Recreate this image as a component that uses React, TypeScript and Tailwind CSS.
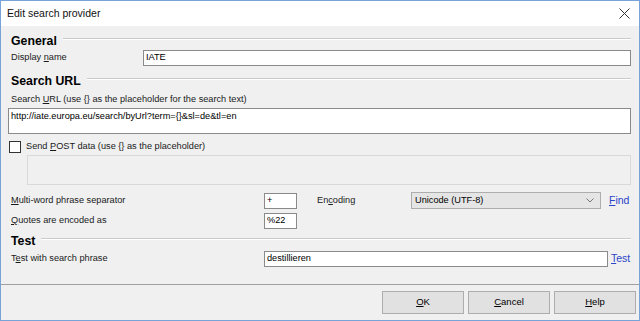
import React from "react";

const font = { fontFamily: '"Liberation Sans", Arial, sans-serif' };

function Header({ text }: { text: string }) {
  return (
    <div className="flex items-center h-[14px]">
      <span className="ml-[3px] text-[12.3px] font-bold text-black leading-none">{text}</span>
      <div className="flex-1 ml-[6px] mt-[-5px] border-t border-[#c9c9c9] border-b-white border-b h-[2px]" />
    </div>
  );
}

function U({ c }: { c: string }) {
  return <span className="underline underline-offset-[1px]">{c}</span>;
}

export default function App() {
  return (
    <div
      style={font}
      className="w-[640px] h-[321px] bg-[#f0f0f0] border border-[#78a3d8] flex flex-col text-[9.2px] text-[#1a1a1a] overflow-hidden"
    >
      {/* Title bar */}
      <div className="h-[25px] bg-white flex items-center justify-between pl-[6px] pr-[9px] shrink-0">
        <span className="text-[10.5px] text-[#111]">Edit search provider</span>
        <svg width="11" height="11" viewBox="0 0 11 11">
          <path d="M0.5 0.5 L10.5 10.5 M10.5 0.5 L0.5 10.5" stroke="#333" strokeWidth="1" />
        </svg>
      </div>

      {/* Body */}
      <div className="flex flex-col pl-[7px] pr-[8px]">
        <div className="mt-[8px]">
          <Header text="General" />
        </div>
        <div className="mt-[2px] flex items-center h-[16px]">
          <span className="ml-[3px] w-[132px]">
            Display <U c="n" />ame
          </span>
          <div className="flex-1 h-[16px] bg-white border border-[#8a8a8a] flex items-center pl-[2px] text-black">
            IATE
          </div>
        </div>

        <div className="mt-[8px]">
          <Header text="Search URL" />
        </div>
        <div className="mt-[6px] h-[12px] flex items-center ml-[3px]">
          <span>
            Search <U c="U" />RL (use {"{}"} as the placeholder for the search text)
          </span>
        </div>
        <div className="mt-[2px] h-[26px] bg-white border border-[#8a8a8a] pl-[2px] pt-[1px] text-black leading-[12px]">
          http://iate.europa.eu/search/byUrl?term={"{}"}&amp;sl=de&amp;tl=en
        </div>

        <div className="mt-[7px] h-[12px] flex items-center">
          <div className="ml-[1px] w-[12px] h-[12px] bg-white border border-[#333]" />
          <span className="ml-[5px]">
            Send <U c="P" />OST data (use {"{}"} as the placeholder)
          </span>
        </div>
        <div className="mt-[2px] ml-[19px] h-[30px] bg-[#f0f0f0] border border-[#d9d9d9]" />

        <div className="mt-[7px] h-[17px] flex items-center">
          <span className="ml-[3px] w-[253px]">
            <U c="M" />ulti-word phrase separator
          </span>
          <div className="w-[33px] h-[16px] bg-white border border-[#8a8a8a] flex items-center pl-[2px] text-black">
            +
          </div>
          <span className="ml-[20px] w-[94px]">
            En<U c="c" />oding
          </span>
          <div className="w-[190px] h-[17px] bg-[#e5e5e5] border border-[#adadad] flex items-center justify-between pl-[3px] pr-[6px] text-black">
            <span>Unicode (UTF-8)</span>
            <svg width="8" height="5" viewBox="0 0 8 5">
              <path d="M0.5 0.5 L4 4 L7.5 0.5" stroke="#777" strokeWidth="1" fill="none" />
            </svg>
          </div>
          <span className="ml-[8px] text-[#2a45c8] text-[10.5px]">
            <U c="F" />ind
          </span>
        </div>

        <div className="mt-[4px] h-[16px] flex items-center">
          <span className="ml-[3px] w-[253px]">
            <U c="Q" />uotes are encoded as
          </span>
          <div className="w-[33px] h-[16px] bg-white border border-[#8a8a8a] flex items-center pl-[2px] text-black">
            %22
          </div>
        </div>

        <div className="mt-[5px]">
          <Header text="Test" />
        </div>
        <div className="mt-[3px] h-[16px] flex items-center">
          <span className="ml-[3px] w-[253px]">
            T<U c="e" />st with search phrase
          </span>
          <div className="w-[344px] h-[16px] bg-white border border-[#8a8a8a] flex items-center pl-[2px] text-black">
            destillieren
          </div>
          <span className="ml-[3px] text-[#2a45c8] text-[10.5px]">
            <U c="T" />est
          </span>
        </div>
      </div>

      <div className="mt-[17px] border-t border-[#a0a0a0]" />

      <div className="mt-[6px] flex justify-end gap-[4px] pr-[3px]">
        <button className="w-[82px] h-[23px] bg-[#e1e1e1] border border-[#adadad] text-[9.5px] text-black">
          <U c="O" />K
        </button>
        <button className="w-[82px] h-[23px] bg-[#e1e1e1] border border-[#adadad] text-[9.5px] text-black">
          <U c="C" />ancel
        </button>
        <button className="w-[82px] h-[23px] bg-[#e1e1e1] border border-[#adadad] text-[9.5px] text-black">
          <U c="H" />elp
        </button>
      </div>
    </div>
  );
}
